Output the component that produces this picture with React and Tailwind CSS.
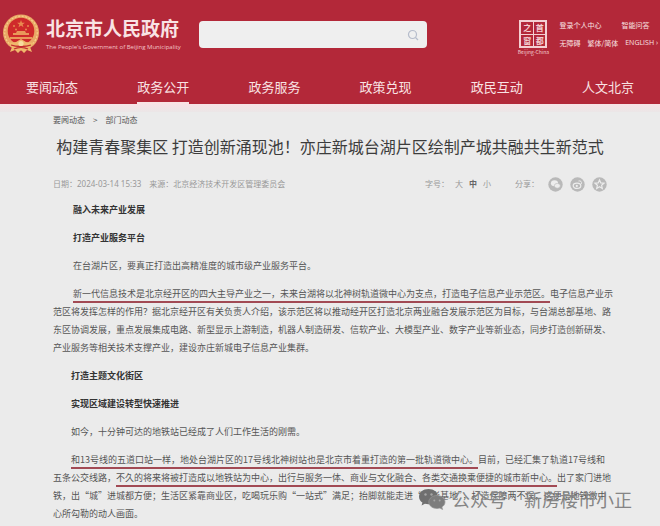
import React from "react";

const NAV = ["要闻动态", "政务公开", "政务服务", "政策兑现", "政民互动", "人文北京"];

function Emblem() {
  return (
    <svg viewBox="0 0 38 40" className="h-10 w-[38px] shrink-0" aria-hidden="true">
      <circle cx="19" cy="18.500" r="18" fill="#e9a765" />
      <circle cx="19" cy="18.500" r="16.300" fill="none" stroke="#f6cf8c" strokeWidth="1.200" strokeDasharray="2 1.500" />
      <circle cx="19" cy="17" r="13.300" fill="#cf2a2b" />
      <path d="M19 6l1 2.800h2.900l-2.300 1.700.9 2.700-2.500-1.700-2.500 1.700.9-2.700-2.300-1.700H18z" fill="#e98a50" />
      <g fill="#e98a50">
        <circle cx="12" cy="12" r="1" />
        <circle cx="14" cy="15.500" r="1" />
        <circle cx="26" cy="12" r="1" />
        <circle cx="24" cy="15.500" r="1" />
      </g>
      <path d="M11 21h16v-2h-3l-1-2h-8l-1 2h-3zM8 25h22v-2H8z" fill="#e9985a" />
      <path d="M6 29l8-1 5-3 5 3 8 1-4 4 2 5-5-2-3 3-3-3-3 3-3-3-5 2 2-5z" fill="#f0b86c" />
      <path d="M9 31c5 2 15 2 20 0M12 35c4-2 10-2 14 0" stroke="#c42c30" strokeWidth="1.300" fill="none" />
      <circle cx="19" cy="29.500" r="2.600" fill="#f8dca0" />
    </svg>
  );
}

function Seal() {
  return (
    <a href="#capital" className="flex w-8 shrink-0 flex-col items-center text-[#f4cfd2]">
      <span className="grid h-7 w-7 grid-cols-2 gap-px border-2 border-[#f4cfd2] bg-[#f4cfd2] text-[8px] leading-[11px] font-bold">
        {["之", "首", "窗", "都"].map((c) => (
          <span key={c} className="bg-[#b32839] text-center">
            {c}
          </span>
        ))}
      </span>
      <span className="text-[5px] leading-[7px] whitespace-nowrap">Beijing-China</span>
    </a>
  );
}

function Share({ label, children }) {
  return (
    <button type="button" aria-label={label} className="h-[15px] w-[15px]">
      <svg viewBox="0 0 15 15" className="h-full w-full">
        <circle cx="7.500" cy="7.500" r="7.200" fill="#b9b9b9" />
        {children}
      </svg>
    </button>
  );
}

function Mark({ children }) {
  return <span className="border-b-2 border-[#a24a54] pb-px">{children}</span>;
}

function WeChat() {
  return (
    <svg viewBox="0 0 28 22" className="h-[22px] w-7" aria-hidden="true">
      <path d="M10.500 1C5 1 1 4.400 1 8.700c0 2.400 1.300 4.500 3.400 5.900L3.600 17.500l3.300-1.700c1.100.3 2.300.5 3.600.5 5.300 0 9.500-3.300 9.500-7.600S15.800 1 10.500 1z" fill="#6f6f6f" />
      <path d="M19 7.500c-4.600 0-8.200 2.900-8.200 6.500s3.600 6.500 8.200 6.500c1 0 2-.1 2.900-.4l2.700 1.400-.7-2.400c1.900-1.200 3.100-3 3.100-5.100 0-3.600-3.500-6.500-8-6.500z" fill="#7d7d7d" stroke="#989898" strokeWidth=".7" />
      <g fill="#a5a5a5">
        <circle cx="7.500" cy="6.500" r="1.200" />
        <circle cx="13.500" cy="6.500" r="1.200" />
        <circle cx="16.300" cy="12.500" r="1" />
        <circle cx="21.700" cy="12.500" r="1" />
      </g>
    </svg>
  );
}

export default function App() {
  return (
    <div className="relative min-h-screen overflow-hidden bg-[#ebebeb] font-['Noto_Sans_CJK_SC',sans-serif] text-[#555]">
      <header className="bg-[#b32839] text-[#f9e3e4]">
        <div className="flex h-[72px] items-start pl-0.5">
          <a href="#home" className="flex w-[197px] shrink-0 gap-1.5 pt-3.5">
            <Emblem />
            <span className="flex flex-col">
              <span className="text-[19px] leading-7 font-bold whitespace-nowrap">北京市人民政府</span>
              <span className="font-['Open_Sans',sans-serif] text-[6px] leading-[10px] whitespace-nowrap text-[#f3c3c7]">
                The People's Government of Beijing Municipality
              </span>
            </span>
          </a>
          <form className="mt-[21px] flex h-[27px] max-w-[228px] flex-1 items-center rounded bg-[#efefef] pr-2" onSubmit={(e) => e.preventDefault()}>
            <input type="text" aria-label="搜索" className="h-full min-w-0 flex-1 bg-transparent px-2 text-xs text-[#333] outline-none" />
            <button type="submit" aria-label="提交搜索">
              <svg viewBox="0 0 12 12" className="h-3 w-3" fill="none" stroke="#b5bccb" strokeWidth="1.200">
                <circle cx="5.500" cy="5.500" r="4" />
                <path d="M8.500 8.500L11 11" />
              </svg>
            </button>
          </form>
          <div className="ml-auto flex gap-2.5 pt-5 pr-0.5">
            <Seal />
            <div className="flex flex-col gap-2 text-[7px] leading-[10px] whitespace-nowrap">
              <div className="flex gap-5">
                <a href="#login">登录个人中心</a>
                <a href="#qa">智能问答</a>
              </div>
              <div className="flex gap-[7px]">
                <a href="#access">无障碍</a>
                <a href="#trad">繁体/简体</a>
                <a href="#en" className="font-['Open_Sans',sans-serif]">ENGLISH ›</a>
              </div>
            </div>
          </div>
        </div>
        <nav className="flex justify-between px-[26px]">
          {NAV.map((n, i) => (
            <a
              key={n}
              href={"#nav" + i}
              className={"flex h-8 items-center border-b-2 text-[13px] leading-5 whitespace-nowrap " + (i === 1 ? "border-[#f9e3e4]" : "border-transparent")}
            >
              {n}
            </a>
          ))}
        </nav>
      </header>
      <div className="h-2 bg-linear-to-b from-[#f8e2e6] to-[#ebe6e7]" />

      <main className="px-[53px]">
        <nav className="flex gap-2 text-[8px] leading-4 text-[#555]">
          <a href="#news">要闻动态</a>
          <span>&gt;</span>
          <a href="#dept">部门动态</a>
        </nav>
        <h1 className="-mx-8 mt-1.5 text-center text-base leading-6 whitespace-nowrap text-[#3c3c3c]">
          构建青春聚集区 打造创新涌现池！亦庄新城台湖片区绘制产城共融共生新范式
        </h1>
        <div className="mt-4 flex items-center justify-between text-[8px] leading-5 whitespace-nowrap text-[#999]">
          <div className="flex gap-2">
            <span>
              日期：<span className="font-['Noto_Sans',sans-serif]">2024-03-14 15:33</span>
            </span>
            <span>来源：北京经济技术开发区管理委员会</span>
          </div>
          <div className="flex items-center gap-6">
            <div className="flex items-center gap-1.5">
              <span>字号：</span>
              <button type="button">大</button>
              <button type="button" className="font-bold text-[#666]">中</button>
              <button type="button">小</button>
            </div>
            <div className="flex items-center gap-[7px]">
              <span className="pr-0.5">分享：</span>
              <Share label="微信">
                <ellipse cx="6.500" cy="6.300" rx="3.600" ry="3" fill="#ededed" />
                <ellipse cx="9.300" cy="8.800" rx="3" ry="2.400" fill="#ededed" stroke="#b9b9b9" strokeWidth=".6" />
              </Share>
              <Share label="微博">
                <ellipse cx="7" cy="8.800" rx="3.800" ry="2.600" fill="none" stroke="#ededed" strokeWidth="1.200" />
                <circle cx="6.800" cy="8.900" r="1.100" fill="#ededed" />
                <path d="M8.500 4c2-.6 3.600.8 3 2.800" fill="none" stroke="#ededed" />
              </Share>
              <Share label="收藏">
                <path d="M7.500 3l1.300 2.900 3.200.3-2.400 2.100.7 3.200-2.800-1.700-2.800 1.700.7-3.200L3 6.200l3.200-.3z" fill="none" stroke="#ededed" strokeWidth="1.200" />
              </Share>
            </div>
          </div>
        </div>

        <article className="-mr-3 mt-[7px] flex flex-col gap-2.5 text-[9px] leading-[18px] whitespace-nowrap text-[#555]">
          <h2 className="indent-5 font-bold text-[#333]">融入未来产业发展</h2>
          <h2 className="indent-5 font-bold text-[#333]">打造产业服务平台</h2>
          <p className="indent-5">在台湖片区，要真正打造出高精准度的城市级产业服务平台。</p>
          <p className="indent-5">
            <Mark>新一代信息技术是北京经开区的四大主导产业之一，未来台湖将以北神树轨道微中心为支点，打造电子信息产业示范区。</Mark>
            电子信息产业示
            <br />
            范区将发挥怎样的作用？据北京经开区有关负责人介绍，该示范区将以推动经开区打造北京两业融合发展示范区为目标，与台湖总部基地、路
            <br />
            东区协调发展，重点发展集成电路、新型显示上游制造，机器人制造研发、信软产业、大模型产业、数字产业等新业态，同步打造创新研发、
            <br />
            产业服务等相关技术支撑产业，建设亦庄新城电子信息产业集群。
          </p>
          <h2 className="indent-[18px] font-bold text-[#333]">打造主题文化街区</h2>
          <h2 className="indent-[18px] font-bold text-[#333]">实现区域建设转型快速推进</h2>
          <p className="indent-[18px]">如今，十分钟可达的地铁站已经成了人们工作生活的刚需。</p>
          <p className="indent-[18px]">
            <Mark>和13号线的五道口站一样，地处台湖片区的17号线北神树站也是北京市着重打造的第一批轨道微中心。</Mark>
            目前，已经汇集了轨道17号线和
            <br />
            五条公交线路，
            <Mark>不久的将来将被打造成以地铁站为中心，出行与服务一体、商业与文化融合、各类交通换乘便捷的城市新中心。</Mark>
            出了家门进地
            <br />
            铁，出“城”进城都方便；生活区紧靠商业区，吃喝玩乐购“一站式”满足；抬脚就能走进“电影基地”，打造保障两不误，这便是地铁微中
            <br />
            心所勾勒的动人画面。
          </p>
        </article>
      </main>

      <div className="absolute top-[487px] left-[418px] flex items-center gap-1.5 text-[18px] leading-6 whitespace-nowrap text-[#858585]">
        <WeChat />
        <span>公众号</span>
        <span className="font-['Liberation_Sans',sans-serif]">·</span>
        <span>新房楼市小正</span>
      </div>
    </div>
  );
}
